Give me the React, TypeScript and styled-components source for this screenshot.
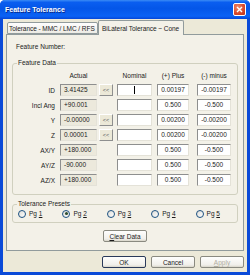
import styled, { createGlobalStyle } from "styled-components";

const GlobalStyle = createGlobalStyle`
  html, body {
    margin: 0;
    padding: 0;
    background: #ffffff;
  }
  body {
    font-family: "Liberation Sans", Arial, sans-serif;
    font-size: 6.5px;
    color: #1a1a1a;
  }
`;

const Window = styled.div`
  width: 250px;
  height: 275px;
  display: flex;
  flex-direction: column;
  background: #0a4ad8;
  border-radius: 5px 5px 0 0;
  overflow: hidden;
`;

const TitleBar = styled.div`
  height: 19px;
  flex: none;
  display: flex;
  align-items: center;
  justify-content: space-between;
  padding: 0 4px 0 5px;
  background: linear-gradient(
    #3b8cf5 0%,
    #0a5ef0 12%,
    #0456e8 45%,
    #0a62f5 85%,
    #0446d8 100%
  );
`;

const Title = styled.span`
  color: #ffffff;
  font-weight: bold;
  font-size: 7px;
  text-shadow: 1px 1px 0 #0a2a8a;
`;

const CloseButton = styled.div`
  width: 13px;
  height: 13px;
  box-sizing: border-box;
  border: 1px solid #ffffff;
  border-radius: 2px;
  background: radial-gradient(circle at 35% 30%, #f08a6c, #d8482a 60%, #b8321a);
  display: flex;
  align-items: center;
  justify-content: center;
`;

const Frame = styled.div`
  flex: 1;
  display: flex;
  padding: 0 3px 3px;
`;

const Client = styled.div`
  flex: 1;
  display: flex;
  flex-direction: column;
  background: #ece9d8;
  padding: 1px 3px 0;
`;

const TabStrip = styled.div`
  display: flex;
  align-items: flex-end;
  height: 15px;
  padding-left: 1px;
  margin-bottom: -1px;
  position: relative;
  z-index: 1;
`;

const Tab = styled.div<{ $active?: boolean; $w: number }>`
  width: ${(p) => p.$w}px;
  height: ${(p) => (p.$active ? 15 : 12)}px;
  box-sizing: border-box;
  border: 1px solid #919b9c;
  border-bottom: ${(p) => (p.$active ? "none" : "1px solid #919b9c")};
  border-radius: 2px 2px 0 0;
  background: ${(p) =>
    p.$active ? "#f3f1e8" : "linear-gradient(#fefefe, #ecebe4)"};
  padding: 0 ${(p) => (p.$active ? 3 : 1)}px;
  display: flex;
  align-items: center;
  white-space: nowrap;
  letter-spacing: -0.05px;
  margin-bottom: ${(p) => (p.$active ? 0 : 1)}px;
`;

const Panel = styled.div`
  height: 217px;
  box-sizing: border-box;
  border: 1px solid #919b9c;
  background: #f3f1e8;
  padding: 8px 5px 0;
  display: flex;
  flex-direction: column;
`;

const FieldLabel = styled.div`
  line-height: 8px;
  margin: 0 0 8px 4px;
`;

const Group = styled.fieldset<{ $gap?: number }>`
  margin: ${(p) => p.$gap ?? 0}px 0 0;
  padding: 0 0 ${(p) => (p.$gap ? 4 : 8)}px;
  border: 1px solid #d0d0bf;
  border-radius: 3px;
  min-width: 0;
`;

const Legend = styled.legend`
  padding: 0 1px;
  margin-left: 4px;
  line-height: 8px;
`;

const DataGrid = styled.div`
  margin-top: 3px;
  display: grid;
  grid-template-columns: 47px 39px 18px 40px 40px 34px;
  grid-template-rows: 11px repeat(7, 12px);
  row-gap: 3px;
  align-items: center;
`;

const Head = styled.div<{ $w: number }>`
  width: ${(p) => p.$w}px;
  text-align: center;
  line-height: 11px;
`;

const RowLabel = styled.div`
  text-align: right;
  padding-right: 5px;
`;

const Box = styled.div<{ $kind: "read" | "edit" | "num"; $w: number }>`
  width: ${(p) => p.$w}px;
  height: 12px;
  box-sizing: border-box;
  border-style: solid;
  border-width: 1px;
  border-color: #8e8f8f #e4e2d8 #e4e2d8 #8e8f8f;
  background: ${(p) => (p.$kind === "read" ? "#ece9dc" : "#ffffff")};
  display: flex;
  align-items: center;
  justify-content: ${(p) => (p.$kind === "read" ? "flex-start" : "center")};
  padding-left: ${(p) => (p.$kind === "read" ? 3 : 0)}px;
  line-height: 10px;
  white-space: nowrap;
`;

const Caret = styled.span`
  width: 1px;
  height: 8px;
  background: #000000;
`;

const SmallButton = styled.div`
  width: 14px;
  height: 12px;
  box-sizing: border-box;
  border: 1px solid;
  border-color: #ffffff #8e8f8f #8e8f8f #ffffff;
  background: #ece9d8;
  color: #555555;
  font-size: 5.5px;
  display: flex;
  align-items: center;
  justify-content: center;
`;

const RadioRow = styled.div`
  display: flex;
  justify-content: space-between;
  padding: 1px 17px 0 5px;
  height: 9px;
  align-items: center;
`;

const RadioItem = styled.div`
  display: flex;
  align-items: center;
  gap: 3px;
`;

const RadioDot = styled.div<{ $on?: boolean }>`
  width: 8px;
  height: 8px;
  box-sizing: border-box;
  border-radius: 50%;
  border: 1px solid #1c5180;
  background: linear-gradient(135deg, #dcdcd7, #ffffff);
  display: flex;
  align-items: center;
  justify-content: center;
  &::after {
    content: "";
    display: ${(p) => (p.$on ? "block" : "none")};
    width: 3px;
    height: 3px;
    border-radius: 50%;
    background: #2d4d2d;
  }
`;

const Key = styled.span`
  text-decoration: underline;
`;

const Button = styled.div<{ $default?: boolean; $disabled?: boolean }>`
  width: 44px;
  height: 12px;
  box-sizing: border-box;
  border: 1px solid ${(p) => (p.$default ? "#2a3a5a" : "#8a8a80")};
  border-radius: 2px;
  background: linear-gradient(#fefefd, #f0efea 80%, #d8d5c8);
  color: ${(p) => (p.$disabled ? "#b0ad9e" : "#1a1a1a")};
  display: flex;
  align-items: center;
  justify-content: center;
`;

const ClearRow = styled.div`
  display: flex;
  justify-content: center;
  margin-top: 7px;
`;

const Footer = styled.div`
  display: flex;
  justify-content: flex-end;
  gap: 5px;
  margin-top: 5px;
`;

type Row = {
  label: string;
  actual: string;
  copy: boolean;
  plus: string;
  minus: string;
};

const rows: Row[] = [
  { label: "ID", actual: "3.41425", copy: true, plus: "0.00197", minus: "-0.00197" },
  { label: "Incl Ang", actual: "+90.001", copy: false, plus: "0.500", minus: "-0.500" },
  { label: "Y", actual: "-0.00000", copy: true, plus: "0.00200", minus: "-0.00200" },
  { label: "Z", actual: "0.00001", copy: true, plus: "0.00200", minus: "-0.00200" },
  { label: "AX/Y", actual: "+180.000", copy: false, plus: "0.500", minus: "-0.500" },
  { label: "AY/Z", actual: "-90.000", copy: false, plus: "0.500", minus: "-0.500" },
  { label: "AZ/X", actual: "+180.000", copy: false, plus: "0.500", minus: "-0.500" },
];

export default function App() {
  return (
    <>
      <GlobalStyle />
      <Window>
        <TitleBar>
          <Title>Feature Tolerance</Title>
          <CloseButton>
            <svg width="7" height="7" viewBox="0 0 7 7">
              <path d="M1 1L6 6M6 1L1 6" stroke="#ffffff" strokeWidth="1.4" />
            </svg>
          </CloseButton>
        </TitleBar>
        <Frame>
          <Client>
            <TabStrip>
              <Tab $w={91}>Tolerance - MMC / LMC / RFS</Tab>
              <Tab $w={86} $active>
                BiLateral Tolerance ~ Cone
              </Tab>
            </TabStrip>
            <Panel>
              <FieldLabel>Feature Number:</FieldLabel>
              <Group>
                <Legend>Feature Data</Legend>
                <DataGrid>
                  <div />
                  <Head $w={37}>Actual</Head>
                  <div />
                  <Head $w={35}>Nominal</Head>
                  <Head $w={32}>(+) Plus</Head>
                  <Head $w={34}>(-) minus</Head>
                  {rows.map((r, i) => (
                    <>
                      <RowLabel key={`l${i}`}>{r.label}</RowLabel>
                      <Box key={`a${i}`} $kind="read" $w={37}>
                        {r.actual}
                      </Box>
                      {r.copy ? <SmallButton key={`b${i}`}>&lt;&lt;</SmallButton> : <div key={`b${i}`} />}
                      <Box key={`n${i}`} $kind="edit" $w={35}>
                        {i === 0 && <Caret />}
                      </Box>
                      <Box key={`p${i}`} $kind="num" $w={32}>
                        {r.plus}
                      </Box>
                      <Box key={`m${i}`} $kind="num" $w={34}>
                        {r.minus}
                      </Box>
                    </>
                  ))}
                </DataGrid>
              </Group>
              <Group $gap={5}>
                <Legend>Tolerance Presets</Legend>
                <RadioRow>
                  {[1, 2, 3, 4, 5].map((n) => (
                    <RadioItem key={n}>
                      <RadioDot $on={n === 2} />
                      <span>
                        Pg <Key>{n}</Key>
                      </span>
                    </RadioItem>
                  ))}
                </RadioRow>
              </Group>
              <ClearRow>
                <Button>
                  <span>
                    <Key>C</Key>lear Data
                  </span>
                </Button>
              </ClearRow>
            </Panel>
            <Footer>
              <Button $default>OK</Button>
              <Button>Cancel</Button>
              <Button $disabled>
                <span>
                  <Key>A</Key>pply
                </span>
              </Button>
            </Footer>
          </Client>
        </Frame>
      </Window>
    </>
  );
}
